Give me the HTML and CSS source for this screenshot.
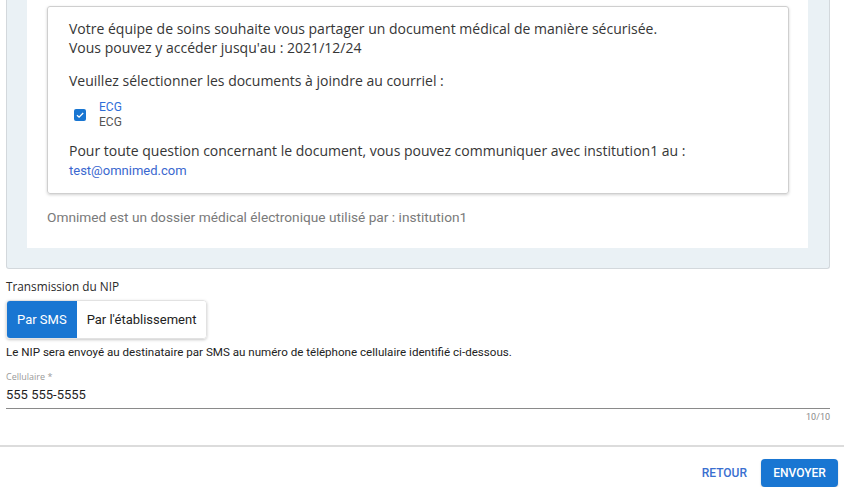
FILE: index.html
```html
<!DOCTYPE html>
<html lang="fr">
<head>
<meta charset="utf-8">
<title>Transmission</title>
<link rel="stylesheet" href="styles.css">
</head>
<body>
<div class="page">
  <section class="preview">
    <div class="preview-inner">
      <div class="card">
        <p class="para">Votre équipe de soins souhaite vous partager un document médical de manière sécurisée.<br>Vous pouvez y accéder jusqu'au : 2021/12/24</p>
        <p class="para gap">Veuillez sélectionner les documents à joindre au courriel :</p>
        <div class="doc">
          <span class="check"><svg width="12" height="12" viewBox="0 0 12 12"><path d="M3 6.2 L5.1 8.2 L9.2 4" fill="none" stroke="#fff" stroke-width="1.3"/></svg></span>
          <div class="doc-names">
            <span class="doc-title">ECG</span>
            <span class="doc-sub">ECG</span>
          </div>
        </div>
        <p class="para">Pour toute question concernant le document, vous pouvez communiquer avec institution1 au :</p>
        <a class="mail">test@omnimed.com</a>
      </div>
      <p class="footnote">Omnimed est un dossier médical électronique utilisé par : institution1</p>
    </div>
  </section>

  <div class="nip">
    <div class="nip-label">Transmission du NIP</div>
    <div class="toggle">
      <span class="toggle-btn active">Par SMS</span>
      <span class="toggle-btn">Par l'établissement</span>
    </div>
    <p class="nip-info">Le NIP sera envoyé au destinataire par SMS au numéro de téléphone cellulaire identifié ci-dessous.</p>
    <div class="field">
      <label class="field-label">Cellulaire *</label>
      <div class="field-value">555 555-5555</div>
      <div class="field-count">10/10</div>
    </div>
  </div>
</div>
<footer class="actions">
  <span class="btn-text">RETOUR</span>
  <span class="btn-primary">ENVOYER</span>
</footer>
</body>
</html>
```

FILE: styles.css
```css
* { box-sizing: border-box; }
html, body { margin: 0; padding: 0; background: #fff; }
body { font-family: "Open Sans", "Noto Sans", sans-serif; color: #333; }

.page { padding: 0 14px 0 6px; }

.preview {
  background: #eaf1f5;
  border: 1px solid #d3d8dc;
  border-top: none;
  border-radius: 0 0 3px 3px;
  padding: 0 21px 20px 20px;
}
.preview-inner {
  background: #fff;
  padding: 6px 19px 1px 20px;
}
.card {
  border: 1px solid #cfcfcf;
  border-radius: 3px;
  box-shadow: 0 1px 3px rgba(0,0,0,0.18);
  padding: 12px 20px 12px 21px;
}
.para {
  margin: 0;
  font-size: 14px;
  line-height: 19px;
  color: #363636;
  white-space: nowrap;
}
.para.gap { margin-top: 14px; }

.doc {
  display: flex;
  align-items: center;
  margin: 10px 0 11px 5px;
}
.check {
  width: 12px; height: 12px;
  background: #1976d2;
  border-radius: 2px;
  display: flex;
  margin-right: 13px;
}
.doc-names {
  display: flex;
  flex-direction: column;
  font-family: Roboto, "Liberation Sans", sans-serif;
  font-size: 12px;
  line-height: 15px;
}
.doc-title { color: #2f6ed8; }
.doc-sub { color: #555; }

.mail {
  display: block;
  font-family: Roboto, "Liberation Sans", sans-serif;
  font-size: 13px;
  line-height: 20px;
  color: #3a67cf;
  margin-top: 1px;
}
.footnote {
  margin: 15px 0 21px 0;
  font-family: Roboto, "Liberation Sans", sans-serif;
  font-size: 13.7px;
  line-height: 17px;
  color: #7a7a7a;
}

.nip { padding-top: 9px; }
.nip-label {
  font-size: 11.8px;
  line-height: 16px;
  color: #2a2a2a;
}
.toggle {
  display: inline-flex;
  margin-top: 6px;
  border: 1px solid #e2e2e2;
  border-radius: 4px;
  box-shadow: 0 1px 3px rgba(0,0,0,0.22);
  overflow: hidden;
  height: 39px;
}
.toggle-btn {
  display: flex;
  align-items: center;
  padding: 0 10px;
  font-family: Roboto, "Liberation Sans", sans-serif;
  font-size: 13px;
  color: #222;
  background: #fff;
  white-space: nowrap;
}
.toggle-btn.active { background: #1976d2; color: #fff; }

.nip-info {
  margin: 6px 0 0;
  font-family: Roboto, "Liberation Sans", sans-serif;
  font-size: 11.6px;
  line-height: 15px;
  color: #222;
}
.field { margin-top: 11px; }
.field-label {
  display: block;
  font-size: 9px;
  line-height: 12px;
  color: #9a9a9a;
}
.field-value {
  margin-top: 2px;
  font-family: Roboto, "Liberation Sans", sans-serif;
  font-size: 13px;
  line-height: 20px;
  color: #1e1e1e;
  padding-bottom: 3px;
  border-bottom: 1px solid #8a8a8a;
}
.field-count {
  text-align: right;
  font-family: Roboto, "Liberation Sans", sans-serif;
  font-size: 9px;
  line-height: 12px;
  color: #8a8a8a;
  margin-top: 2px;
}

.actions {
  margin-top: 22px;
  border-top: 2px solid #dcdcdc;
  display: flex;
  justify-content: flex-end;
  align-items: center;
  gap: 14px;
  padding: 12px 6px 0 0;
}
.btn-text {
  font-family: Roboto, "Liberation Sans", sans-serif;
  font-weight: 500;
  font-size: 12px;
  color: #3a6fd0;
}
.btn-primary {
  font-family: Roboto, "Liberation Sans", sans-serif;
  font-weight: 500;
  font-size: 12px;
  color: #fff;
  background: #1976d2;
  border-radius: 4px;
  width: 77px;
  height: 28px;
  display: flex;
  align-items: center;
  justify-content: center;
  box-shadow: 0 1px 2px rgba(0,0,0,0.2);
}
```
